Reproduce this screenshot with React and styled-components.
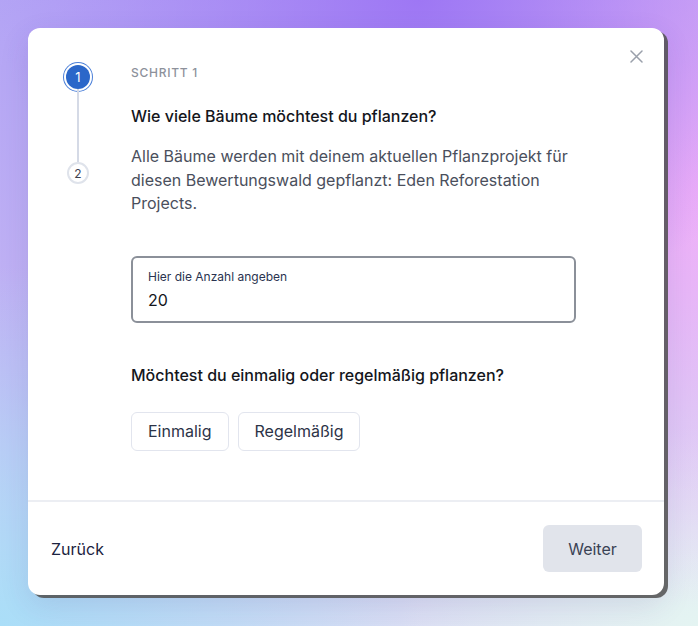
import React from "react";
import styled, { createGlobalStyle } from "styled-components";

const GlobalStyle = createGlobalStyle`
  html, body {
    margin: 0;
    padding: 0;
    height: 100%;
  }
  body {
    font-family: Inter, "Noto Sans", "Liberation Sans", sans-serif;
    -webkit-font-smoothing: antialiased;
  }
`;

const Backdrop = styled.div`
  width: 698px;
  height: 626px;
  box-sizing: border-box;
  padding: 28px 34px 31px 28px;
  background:
    radial-gradient(ellipse 420px 320px at 60% 0%, rgba(156, 116, 244, 0.95), rgba(156, 116, 244, 0) 100%),
    radial-gradient(ellipse 360px 420px at 100% 30%, rgba(240, 176, 248, 1), rgba(240, 176, 248, 0) 100%),
    radial-gradient(ellipse 420px 360px at 0% 100%, rgba(170, 222, 248, 1), rgba(170, 222, 248, 0) 100%),
    radial-gradient(ellipse 300px 200px at 100% 100%, rgba(228, 244, 242, 1), rgba(228, 244, 242, 0) 100%),
    linear-gradient(160deg, #b3a4f5 0%, #c4b6f4 45%, #d2d6f4 75%, #e4e6f4 100%);
`;

const Card = styled.div`
  position: relative;
  height: 100%;
  background: #fff;
  border-radius: 12px;
  box-shadow: 4px 3px 0 rgba(80, 80, 80, 0.85), 0 10px 30px rgba(60, 40, 120, 0.12);
  display: flex;
  flex-direction: column;
  overflow: hidden;
`;

const CloseButton = styled.button`
  position: absolute;
  top: 20px;
  right: 20px;
  width: 16px;
  height: 16px;
  padding: 0;
  border: 0;
  background: none;
  color: #9aa0ab;
  display: flex;
  align-items: center;
  justify-content: center;
`;

const Main = styled.div`
  flex: 1;
  display: flex;
  gap: 37px;
  padding: 34px 0 0 34px;
`;

const Stepper = styled.div`
  width: 32px;
  display: flex;
  flex-direction: column;
  align-items: center;
`;

const ActiveStep = styled.div`
  margin-top: 3px;
  width: 24px;
  height: 24px;
  border-radius: 50%;
  background: #2b67c9;
  box-shadow: 0 0 0 2px #fff, 0 0 0 3px #4a7fd8;
  color: #fff;
  font-size: 13px;
  display: flex;
  align-items: center;
  justify-content: center;
`;

const StepLine = styled.div`
  width: 2px;
  height: 73px;
  background: #d5dae6;
`;

const Step = styled.div`
  width: 22px;
  height: 22px;
  box-sizing: border-box;
  border-radius: 50%;
  border: 2px solid #dfe3eb;
  color: #3d4250;
  font-size: 12px;
  display: flex;
  align-items: center;
  justify-content: center;
`;

const Content = styled.div`
  width: 445px;
  display: flex;
  flex-direction: column;
`;

const Eyebrow = styled.div`
  font-size: 12px;
  line-height: 22px;
  font-weight: 500;
  letter-spacing: 0.06em;
  color: #8d919b;
`;

const Question = styled.h2`
  margin: ${p => p.$top}px 0 0;
  font-size: 16px;
  line-height: 24px;
  font-weight: 500;
  color: #14161c;
`;

const Description = styled.p`
  margin: 17px 0 0;
  font-size: 16px;
  line-height: 23.5px;
  color: #4a4f5c;
`;

const Field = styled.label`
  margin-top: 40px;
  height: 67px;
  box-sizing: border-box;
  border: 2px solid #8b9099;
  border-radius: 6px;
  padding: 11px 15px 0;
  display: flex;
  flex-direction: column;
`;

const FieldLabel = styled.span`
  font-size: 12px;
  line-height: 16px;
  color: #2a3350;
`;

const FieldInput = styled.input`
  margin-top: 4px;
  border: 0;
  padding: 0;
  outline: none;
  font: inherit;
  font-size: 16px;
  line-height: 22px;
  color: #14161c;
  background: transparent;
`;

const Options = styled.div`
  margin-top: 25px;
  display: flex;
  gap: 9px;
`;

const Option = styled.button`
  height: 39px;
  padding: 0 16px;
  border: 1px solid #e2e5ee;
  border-radius: 6px;
  background: #fff;
  font-family: inherit;
  font-size: 16px;
  font-weight: 400;
  color: #2c3347;
`;

const Footer = styled.div`
  height: 95px;
  box-sizing: border-box;
  border-top: 2px solid #eceef3;
  padding: 0 22px 0 23px;
  display: flex;
  align-items: center;
  justify-content: space-between;
`;

const BackLink = styled.button`
  border: 0;
  padding: 0;
  background: none;
  font-family: inherit;
  font-size: 16px;
  font-weight: 400;
  color: #1b2340;
`;

const NextButton = styled.button`
  width: 99px;
  height: 47px;
  border: 0;
  border-radius: 6px;
  background: #e1e4eb;
  font-family: inherit;
  font-size: 16px;
  font-weight: 400;
  color: #3a4254;
`;

export default function App() {
  return (
    <>
      <GlobalStyle />
      <Backdrop>
        <Card>
          <CloseButton aria-label="Schließen">
            <svg width="13" height="13" viewBox="0 0 13 13" fill="none">
              <path d="M1 1l11 11M12 1L1 12" stroke="currentColor" strokeWidth="1.5" strokeLinecap="round" />
            </svg>
          </CloseButton>
          <Main>
            <Stepper>
              <ActiveStep>1</ActiveStep>
              <StepLine />
              <Step>2</Step>
            </Stepper>
            <Content>
              <Eyebrow>SCHRITT 1</Eyebrow>
              <Question $top={20}>Wie viele Bäume möchtest du pflanzen?</Question>
              <Description>
                Alle Bäume werden mit deinem aktuellen Pflanzprojekt für diesen
                Bewertungswald gepflanzt: Eden Reforestation Projects.
              </Description>
              <Field>
                <FieldLabel>Hier die Anzahl angeben</FieldLabel>
                <FieldInput defaultValue="20" />
              </Field>
              <Question $top={40}>Möchtest du einmalig oder regelmäßig pflanzen?</Question>
              <Options>
                <Option>Einmalig</Option>
                <Option>Regelmäßig</Option>
              </Options>
            </Content>
          </Main>
          <Footer>
            <BackLink>Zurück</BackLink>
            <NextButton>Weiter</NextButton>
          </Footer>
        </Card>
      </Backdrop>
    </>
  );
}
